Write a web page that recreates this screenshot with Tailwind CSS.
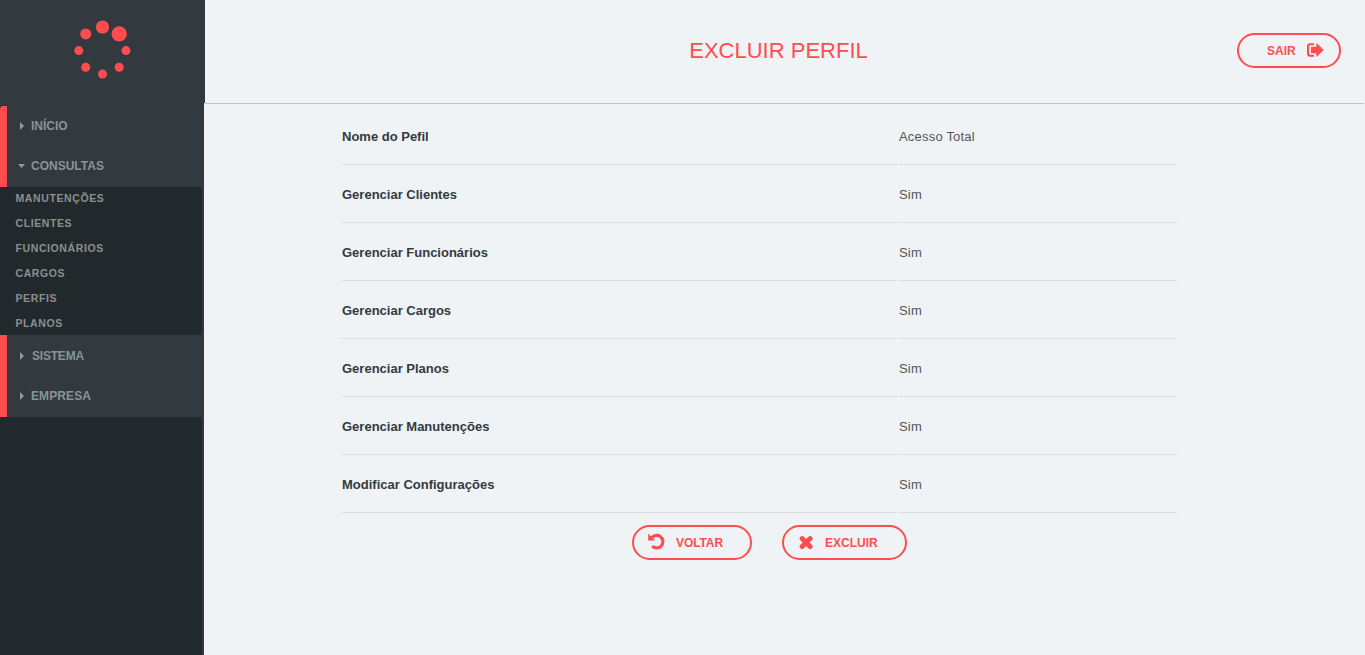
<!DOCTYPE html>
<html lang="pt-BR">
<head>
<meta charset="utf-8">
<title>Excluir Perfil</title>
<script src="https://cdn.jsdelivr.net/npm/@tailwindcss/browser@4"></script>
</head>
<body class="flex h-screen overflow-hidden bg-[#eff3f6] font-['Liberation_Sans',Arial,sans-serif] text-[13px] text-[#555]">
<aside class="flex h-full w-[205px] shrink-0 flex-col">
  <div class="h-[103px] w-[205px] shrink-0 bg-[#323a40]">
    <svg class="h-[103px] w-[205px]" viewBox="0 0 205 103" fill="#ff4d4d">
      <circle cx="102.5" cy="27" r="6.6"/><circle cx="119.2" cy="33.9" r="7.6"/><circle cx="126" cy="50.6" r="4.5"/><circle cx="119.2" cy="67.3" r="4.5"/><circle cx="102.5" cy="74.1" r="4.5"/><circle cx="85.7" cy="67.3" r="4.5"/><circle cx="78.8" cy="50.6" r="4.5"/><circle cx="85.7" cy="33.9" r="5.5"/>
    </svg>
  </div>
  <nav class="flex w-[204px] grow flex-col border-r-2 border-[#323a40] bg-[#22292c] font-bold text-[#879596]">
    <div class="h-[3px] bg-[#323a40]"></div>
    <div class="rounded-tl-[3px] border-l-[7px] border-[#ff4d4d] bg-[#323a40] pb-px text-[12px]">
      <a class="flex h-10 items-center pl-[13px]"><svg class="h-[8px] w-[11px]" viewBox="0 0 11 8" fill="#999"><path d="M0 0L4 4L0 8z"/></svg><span>INÍCIO</span></a>
      <a class="flex h-10 items-center pl-[11px]"><svg class="h-[8px] w-[13px]" viewBox="0 0 13 8" fill="#999"><path d="M0 2h7L3.5 6z"/></svg><span>CONSULTAS</span></a>
    </div>
    <div class="flex h-[148px] flex-col pl-[15.5px] text-[10.5px] tracking-[0.6px] text-[#8b8f90]">
      <a class="h-[25px] leading-[23px]">MANUTENÇÕES</a>
      <a class="h-[25px] leading-[23px]">CLIENTES</a>
      <a class="h-[25px] leading-[23px]">FUNCIONÁRIOS</a>
      <a class="h-[25px] leading-[23px]">CARGOS</a>
      <a class="h-[25px] leading-[23px]">PERFIS</a>
      <a class="h-[23px] leading-[23px]">PLANOS</a>
    </div>
    <div class="border-l-[7px] border-[#ff4d4d] bg-[#323a40] pt-px pb-px text-[12px]">
      <a class="flex h-10 items-center pl-[13px]"><svg class="h-[8px] w-[12px]" viewBox="0 0 12 8" fill="#999"><path d="M0 0L4 4L0 8z"/></svg><span class="tracking-[-0.2px]">SISTEMA</span></a>
      <a class="flex h-10 items-center pl-[13px]"><svg class="h-[8px] w-[11px]" viewBox="0 0 11 8" fill="#999"><path d="M0 0L4 4L0 8z"/></svg><span class="tracking-[0.1px]">EMPRESA</span></a>
    </div>
  </nav>
</aside>
<main class="flex min-w-0 grow flex-col">
  <header class="mr-px grid h-[104px] shrink-0 grid-cols-[1fr_auto_1fr] items-center border-b border-[#bcc6cc] pr-[23px] pb-[3px] pl-[11px]">
    <h1 class="col-start-2 text-[22px] leading-[25px] text-[#ff4d4d]">EXCLUIR PERFIL</h1>
    <button class="flex h-[35px] w-[104px] items-center justify-self-end rounded-full border-2 border-[#ff4d4d] pl-7 text-[12px] font-bold text-[#ff4d4d]"><span class="w-10 pt-px text-left">SAIR</span><svg class="h-4 w-[17px]" viewBox="0 0 17 16" fill="#ff4d4d"><path d="M7 1.2H3Q0 1.2 0 4.2V11.8Q0 14.8 3 14.8H7V12.7H3.2Q2.2 12.7 2.2 11.7V4.3Q2.2 3.3 3.2 3.3H7z"/><path d="M9.3 1.6Q9.3.9 10 1.4L16.2 7.4Q16.8 8 16.2 8.6L10 14.6Q9.3 15.1 9.3 14.4V11.2H4.6Q4 11.2 4 10.6V5.4Q4 4.8 4.6 4.8H9.3z"/></svg></button>
  </header>
  <section class="ml-[137px] w-[835px] pt-[3px]">
    <dl class="grid grid-cols-[556px_278px] gap-x-px *:h-[58px] *:border-b *:border-[#d8dde0] *:leading-[59px] [&>dd]:tracking-[0.2px] [&>dt]:mr-px [&>dt]:font-bold [&>dt]:text-[#333a40]">
      <dt>Nome do Pefil</dt><dd>Acesso Total</dd>
      <dt>Gerenciar Clientes</dt><dd>Sim</dd>
      <dt>Gerenciar Funcionários</dt><dd>Sim</dd>
      <dt>Gerenciar Cargos</dt><dd>Sim</dd>
      <dt>Gerenciar Planos</dt><dd>Sim</dd>
      <dt>Gerenciar Manutenções</dt><dd>Sim</dd>
      <dt>Modificar Configurações</dt><dd>Sim</dd>
    </dl>
    <div class="mt-3 ml-[290px] flex gap-[30px] text-[12px] font-bold text-[#ff4d4d]">
      <button class="flex h-[35px] w-[120px] items-center rounded-full border-2 border-[#ff4d4d] pl-[14px]"><svg class="mr-[11px] h-[17px] w-[17px] -translate-y-px" viewBox="0 0 17 17"><path d="M3.2 5.4A6.3 6.3 0 1 1 4.2 13.2" fill="none" stroke="#ff4d4d" stroke-width="3.2"/><path d="M.2 1.5Q.2.8.8 1.3L6.7 7Q7.1 7.6 6.4 7.6H.9Q.2 7.6.2 6.9z" fill="#ff4d4d"/></svg><span class="tracking-[-0.1px]">VOLTAR</span></button>
      <button class="flex h-[35px] w-[125px] items-center rounded-full border-2 border-[#ff4d4d] pl-[15px]"><svg class="mr-[12px] h-[14px] w-[14px] -translate-y-[0.5px]" viewBox="0 0 14 14"><path d="M3.1 3.1L11.1 11.1M11.1 3.1L3.1 11.1" stroke="#ff4d4d" stroke-width="5" stroke-linecap="round"/></svg><span>EXCLUIR</span></button>
    </div>
  </section>
</main>
</body>
</html>
